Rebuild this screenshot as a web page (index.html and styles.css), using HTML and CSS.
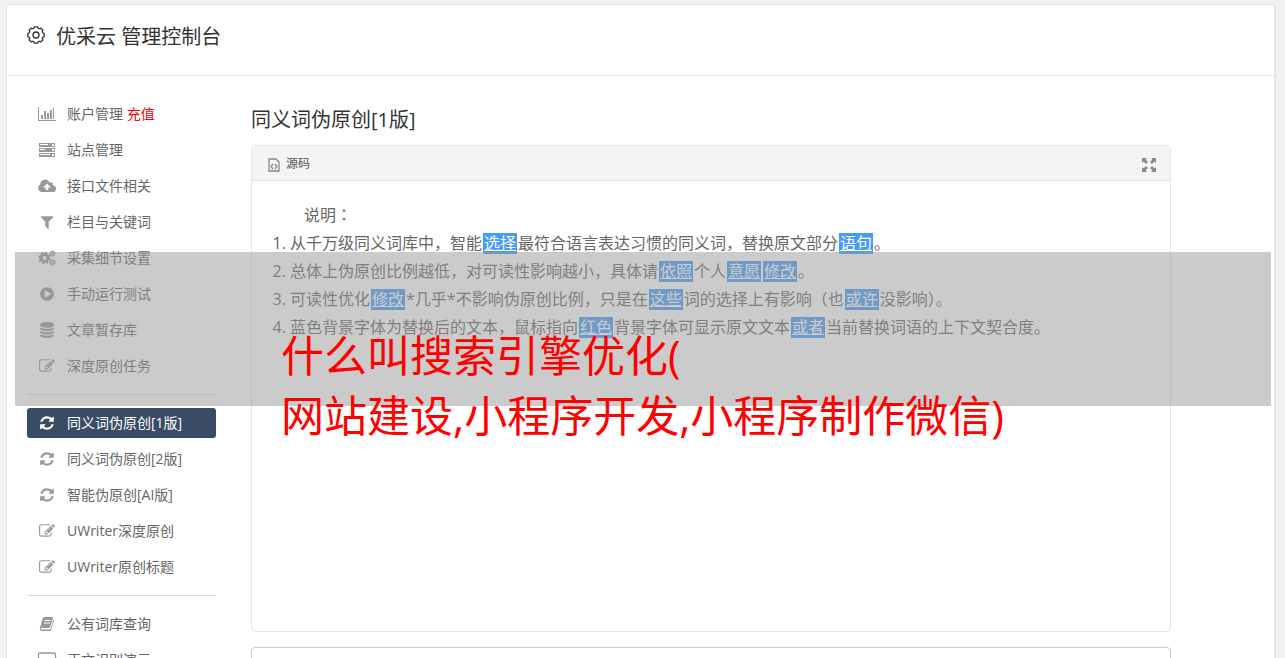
FILE: index.html
```
<!DOCTYPE html>
<html lang="zh-CN">
<head>
<meta charset="utf-8">
<title>优采云 管理控制台</title>
<link rel="stylesheet" href="styles.css">
</head>
<body>
<svg class="sprite" aria-hidden="true">
  <symbol id="chart" viewBox="0 0 20 16"><path d="M1 1h1v13h17v1H1zM4 9h2v4H4zM7 5h2v8H7zM10 7h2v6h-2zM13 4h2v9h-2zM16 2h1v11h-1z"/></symbol>
  <symbol id="server" viewBox="0 0 20 16"><path fill-rule="evenodd" d="M2 1h16v4H2zM3 2v1h8V2zM15 2v2h2V2zM2 6h16v4H2zM3 7v1h5V7zM15 7v2h2V7zM2 11h16v4H2zM3 12v1h10v-1zM15 12v2h2v-2z"/></symbol>
  <symbol id="cloud" viewBox="0 0 20 16"><path fill-rule="evenodd" d="M5 14a4 4 0 0 1-1.700-7.500A4.800 4.800 0 0 1 12.500 4.400a2.500 2.500 0 0 1 3.400 3A3.300 3.300 0 0 1 15.500 14zM10 5.500 6.500 9v.6h2.200V12h2.600V9.600h2.200V9z"/></symbol>
  <symbol id="filter" viewBox="0 0 1792 1792"><path d="M1595 295q17 41-14 70l-493 493v742q0 42-39 59-13 5-25 5-27 0-45-19l-256-256q-19-19-19-45v-486l-493-493q-31-29-14-70 17-39 59-39h1280q42 0 59 39z"/></symbol>
  <symbol id="cogs" viewBox="0 0 18 16"><g fill="none" stroke="currentColor"><circle cx="6.500" cy="8" r="3.500" stroke-width="3"/><circle cx="6.500" cy="8" r="5.400" stroke-width="1.800" stroke-dasharray="2.120 2.120"/><circle cx="14.500" cy="3.500" r="1.700" stroke-width="1.400"/><circle cx="14.500" cy="3.500" r="2.700" stroke-width="1" stroke-dasharray="1.210 1.210"/><circle cx="14.500" cy="12.500" r="1.700" stroke-width="1.400"/><circle cx="14.500" cy="12.500" r="2.700" stroke-width="1" stroke-dasharray="1.210 1.210"/></g></symbol>
  <symbol id="play" viewBox="0 0 1792 1792"><path d="M896 128q209 0 385.500 103t279.500 279.500 103 385.500-103 385.500-279.500 279.500-385.500 103-385.500-103-279.500-279.500-103-385.500 103-385.500 279.500-279.500 385.500-103zm384 823q32-18 32-55t-32-55l-544-320q-31-19-64-1-32 19-32 56v640q0 37 32 56 16 8 32 8 17 0 32-9z"/></symbol>
  <symbol id="database" viewBox="0 0 1792 1792"><path d="M896 768q237 0 443-43t325-127v170q0 69-103 128t-280 93.500-385 34.500-385-34.500-280-93.500-103-128v-170q119 84 325 127t443 43zm0 768q237 0 443-43t325-127v170q0 69-103 128t-280 93.500-385 34.500-385-34.500-280-93.500-103-128v-170q119 84 325 127t443 43zm0-384q237 0 443-43t325-127v170q0 69-103 128t-280 93.500-385 34.500-385-34.500-280-93.500-103-128v-170q119 84 325 127t443 43zm0-1152q208 0 385 34.500t280 93.500 103 128v128q0 69-103 128t-280 93.500-385 34.500-385-34.500-280-93.500-103-128v-128q0-69 103-128t280-93.500 385-34.500z"/></symbol>
  <symbol id="edit" viewBox="0 0 1792 1792"><path d="M888 1184l116-116-152-152-116 116v56h96v96h56zm440-720q-16-16-33 1l-350 350q-17 17-1 33t33-1l350-350q17-17 1-33zm80 594v190q0 119-84.500 203.500t-203.500 84.500h-832q-119 0-203.500-84.500t-84.500-203.500v-832q0-119 84.500-203.500t203.500-84.500h832q63 0 117 25 15 7 18 23 3 17-9 29l-49 49q-14 14-32 8-23-6-45-6h-832q-66 0-113 47t-47 113v832q0 66 47 113t113 47h832q66 0 113-47t47-113v-126q0-13 9-22l64-64q15-15 35-7t20 29zm-96-738l288 288-672 672h-288v-288zm444 132l-92 92-288-288 92-92q28-28 68-28t68 28l152 152q28 28 28 68t-28 68z"/></symbol>
  <symbol id="refresh" viewBox="0 0 1792 1792"><path d="M1639 1056q0 5-1 7-64 268-268 434.500t-478 166.500q-146 0-282.500-55t-243.500-157l-129 129q-19 19-45 19t-45-19-19-45v-448q0-26 19-45t45-19h448q26 0 45 19t19 45-19 45l-137 137q71 66 161 102t187 36q134 0 250-65t186-179q11-17 53-117 8-23 30-23h192q13 0 22.500 9.500t9.500 22.500zm25-800v448q0 26-19 45t-45 19h-448q-26 0-45-19t-19-45 19-45l138-138q-148-137-349-137-134 0-250 65t-186 179q-11 17-53 117-8 23-30 23h-199q-13 0-22.500-9.500t-9.500-22.500v-7q65-268 270-434.500t480-166.500q146 0 284 55.500t245 156.500l130-129q19-19 45-19t45 19 19 45z"/></symbol>
  <symbol id="book" viewBox="0 0 16 16"><path fill-rule="evenodd" d="M5 1h8q1.300.2.900 1.600L11.200 11q-.4 1-1.400 1H2.600q-1 .1-.8.900.2.600 1 .6h7.500q1.100 0 1.500-1.100l2.800-8.900q.8.600.5 1.500L12.300 13.500Q11.900 15 10.400 15H2.600Q.700 14.700.700 12.500L3.700 2.400Q4.100 1.100 5 1zM5.800 4l-.3 1h6l.3-1zM5.100 6.500l-.3 1h6l.3-1z"/></symbol>
  <symbol id="screen" viewBox="0 0 18 16"><path d="M2 1h14q1.500 0 1.500 1.500v9q0 1.500-1.500 1.500H2Q.500 13 .500 11.500v-9Q.500 1 2 1z" fill="none" stroke="currentColor" stroke-width="1.300"/><path d="M6 14h6v2H6z"/></symbol>
</svg>
<div class="app">
  <header class="top">
    <svg class="gear" viewBox="0 0 18 18" aria-hidden="true"><g fill="none" stroke="currentColor" stroke-width="1.300" stroke-linejoin="round"><circle cx="9" cy="9" r="3"/><path d="M7.400.8h3.200q.5 2.200 2.100 1.800l1.200-.4 2 2-.5 1.200q-.4 1.500 1.800 2v3.200q-2.200.5-1.800 2l.5 1.200-2 2-1.200-.4q-1.600-.5-2.100 1.800H7.400q-.5-2.300-2.100-1.800l-1.200.4-2-2 .5-1.200q.4-1.500-1.800-2V7.400q2.200-.5 1.800-2l-.5-1.200 2-2 1.200.4Q6.900 3 7.400.8z"/></g></svg>
    <h1>优采云 管理控制台</h1>
  </header>
  <div class="columns">
    <nav class="side">
      <a class="item" href="#"><svg><use href="#chart"/></svg><span>账户管理 <b>充值</b></span></a>
      <a class="item" href="#"><svg><use href="#server"/></svg><span>站点管理</span></a>
      <a class="item" href="#"><svg><use href="#cloud"/></svg><span>接口文件相关</span></a>
      <a class="item" href="#"><svg><use href="#filter"/></svg><span>栏目与关键词</span></a>
      <a class="item" href="#"><svg><use href="#cogs"/></svg><span>采集细节设置</span></a>
      <a class="item" href="#"><svg><use href="#play"/></svg><span>手动运行测试</span></a>
      <a class="item" href="#"><svg><use href="#database"/></svg><span>文章暂存库</span></a>
      <a class="item" href="#"><svg><use href="#edit"/></svg><span>深度原创任务</span></a>
      <hr>
      <a class="item active" href="#"><svg><use href="#refresh"/></svg><span>同义词伪原创[1版]</span></a>
      <a class="item" href="#"><svg><use href="#refresh"/></svg><span>同义词伪原创[2版]</span></a>
      <a class="item" href="#"><svg><use href="#refresh"/></svg><span>智能伪原创[AI版]</span></a>
      <a class="item" href="#"><svg><use href="#edit"/></svg><span>UWriter深度原创</span></a>
      <a class="item" href="#"><svg><use href="#edit"/></svg><span>UWriter原创标题</span></a>
      <hr>
      <a class="item" href="#"><svg><use href="#book"/></svg><span>公有词库查询</span></a>
      <a class="item" href="#"><svg><use href="#screen"/></svg><span>正文识别演示</span></a>
    </nav>
    <main class="main">
      <h2>同义词伪原创[1版]</h2>
      <section class="editor">
        <div class="toolbar">
          <button type="button" class="tool"><svg class="source" viewBox="0 0 12 14" aria-hidden="true"><path d="M1 1h7l3 3v9H1zM5 6 3 8.500 5 11M7 6l2 2.500L7 11" fill="none" stroke="currentColor" stroke-width="1.300"/></svg>源码</button>
          <button type="button" class="tool" aria-label="全屏"><svg class="expand" viewBox="0 0 14 14" aria-hidden="true"><path d="M0 0h5L3.500 1.500 6 4 4 6 1.500 3.500 0 5zM14 0v5l-1.500-1.500L10 6 8 4l2.500-2.500L9 0zM0 14V9l1.500 1.500L4 8l2 2-2.500 2.500L5 14zM14 14H9l1.500-1.500L8 10l2-2 2.500 2.500L14 9z"/></svg></button>
        </div>
        <div class="content">
          <p>说明<span lang="zh-TW">：</span></p>
          <ol>
            <li>从千万级同义词库中，智能<mark>选择</mark>最符合语言表达习惯的同义词，替换原文部分<mark>语句</mark>。</li>
            <li>总体上伪原创比例越低，对可读性影响越小，具体请<mark>依照</mark>个人<mark>意愿</mark><mark>修改</mark>。</li>
            <li>可读性优化<mark>修改</mark>*几乎*不影响伪原创比例，只是在<mark>这些</mark>词的选择上有影响（也<mark>或许</mark>没影响）。</li>
            <li>蓝色背景字体为替换后的文本，鼠标指向<mark>红色</mark>背景字体可显示原文文本<mark>或者</mark>当前替换词语的上下文契合度。</li>
          </ol>
        </div>
      </section>
      <textarea class="result" aria-label="结果"></textarea>
    </main>
  </div>
  <div class="banner"><p>什么叫搜索引擎优化(<br>网站建设,小程序开发,小程序制作微信)</p></div>
</div>
</body>
</html>
```
FILE: styles.css
```
* { box-sizing: border-box; }
body {
  margin: 0;
  height: 100vh;
  overflow: hidden;
  padding: 4px 9px 0 6px;
  background: #f1f1f1;
  color: #666;
  font: 14px/20px "Open Sans", "Noto Sans CJK SC", sans-serif;
}
h1, h2, p, ol { margin: 0; }
.sprite { display: none; }
.app {
  min-height: 100%;
  background: #fff;
  border: 1px solid #e5e5e5;
  border-right-width: 2px;
  border-radius: 4px 4px 0 0;
}
.top {
  display: flex;
  align-items: flex-start;
  gap: 11px;
  padding: 17px 20px 24px;
  border-bottom: 1px solid #e5e5e5;
  color: #333;
}
.gear { width: 18px; height: 18px; margin-top: 4px; }
h1, h2 { font-size: 20px; line-height: 29px; font-weight: 400; color: #333; }
.columns { display: flex; gap: 35px; padding: 23px 103px 0 20px; }
.side { width: 189px; flex: none; display: flex; flex-direction: column; gap: 6px; }
.item {
  display: flex;
  align-items: center;
  gap: 10px;
  height: 30px;
  padding: 0 10px;
  border-radius: 3px;
  color: #666;
  text-decoration: none;
}
.item svg { width: 20px; height: 16px; fill: currentColor; color: #999; }
.item b { font-weight: 400; color: #f00; }
.item.active { background: #3a4b66; color: #fff; }
.item.active svg { color: #fff; }
.side hr { width: 100%; height: 1px; margin: 7px 0; border: 0; background: #ddd; }
.main { flex: 1; min-width: 0; padding-top: 6px; }
.editor {
  margin-top: 11px;
  min-height: 487px;
  border: 1px solid #e5e5e5;
  border-radius: 4px;
}
.toolbar {
  display: flex;
  justify-content: space-between;
  height: 35px;
  padding: 2px 14px 0 16px;
  background: #f4f4f4;
  border-bottom: 1px solid #e5e5e5;
  border-radius: 3px 3px 0 0;
}
.tool {
  display: flex;
  align-items: center;
  gap: 6px;
  padding: 0;
  border: 0;
  background: none;
  color: #555;
  font: inherit;
  font-size: 12px;
}
.tool svg { color: #888; fill: currentColor; margin-top: 2px; }
.source { width: 12px; height: 14px; }
.expand { width: 14px; height: 14px; }
.content { padding: 20px; font-size: 16px; line-height: 28px; }
.content p { text-indent: 2em; }
.content ol { padding-left: 18px; }
.content mark {
  margin: 0 1px;
  padding: 0 1px;
  color: #fff;
  background: linear-gradient(#469bf5, #469bf5) center / 100% 21px no-repeat;
  text-decoration: underline;
}
.result {
  display: block;
  width: 100%;
  height: 200px;
  margin-top: 15px;
  border: 1px solid #ccc;
  border-radius: 4px;
  background: #fff;
  resize: none;
}
/* Translucent caption laid over the console */
.banner {
  position: absolute;
  top: 252px;
  left: 15px;
  right: 14px;
  height: 154px;
  padding: 74px 0 0 266px;
  background: rgba(151, 151, 151, 0.5);
  color: #f00;
  font-size: 43px;
  line-height: 60px;
  white-space: nowrap;
}
```
